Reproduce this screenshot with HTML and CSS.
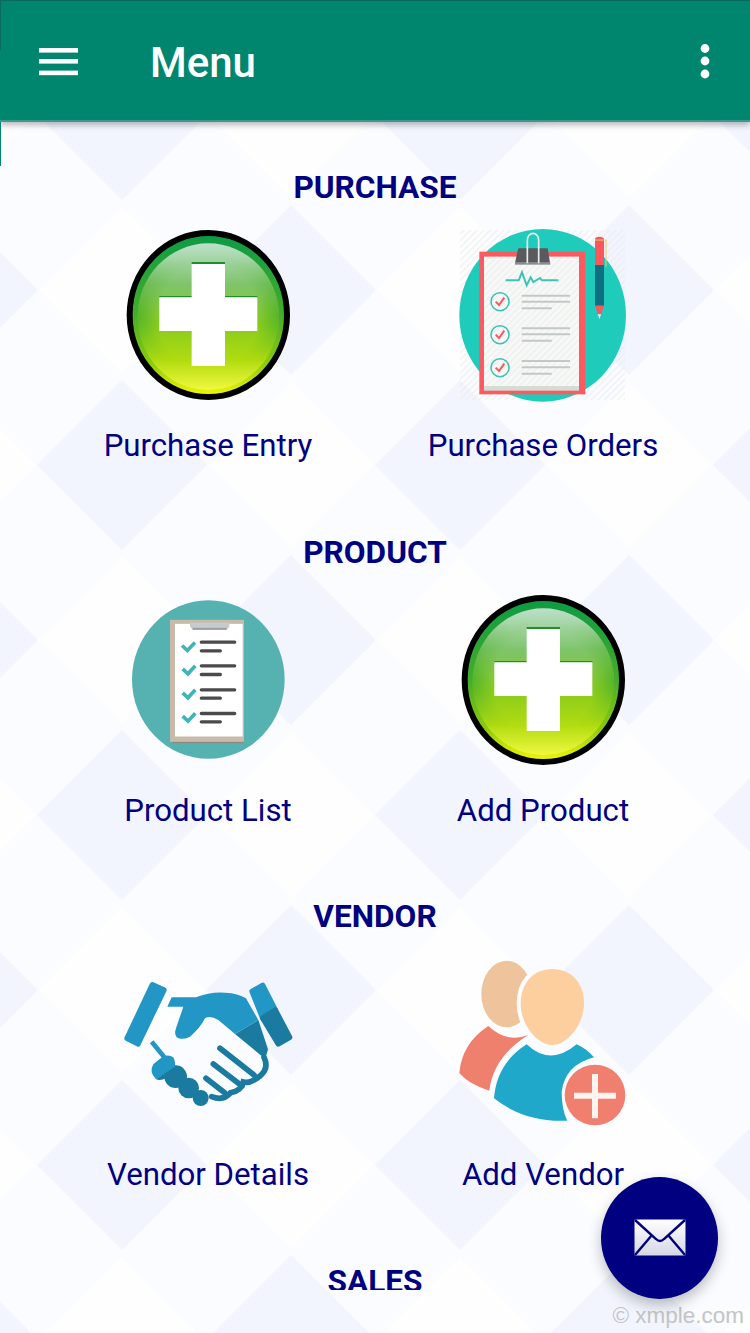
FILE: index.html
```html
<!DOCTYPE html>
<html lang="en">
<head>
<meta charset="utf-8">
<title>Menu</title>
<link rel="stylesheet" href="styles.css">
</head>
<body>
<div class="screen">
  <svg class="backdrop" width="750" height="1333" aria-hidden="true">
    <defs>
      <pattern id="diamonds" width="338" height="350" patternUnits="userSpaceOnUse" patternTransform="translate(37 30)">
        <rect width="338" height="350" fill="#fbfcff"/>
        <path d="M85 0L170 85L85 170L0 85Z" fill="#f2f5fd"/>
        <path d="M254 175L339 260L254 345L169 260Z" fill="#f2f5fd"/>
        <path d="M85 177L168 260L85 343L2 260Z" fill="#fefefe"/>
        <path d="M254 2L337 85L254 168L171 85Z" fill="#fefefe"/>
      </pattern>
      <linearGradient id="gRing" x1="0" y1="0" x2="0" y2="1">
        <stop offset="0" stop-color="#0c9a44"/>
        <stop offset=".5" stop-color="#45ad2a"/>
        <stop offset=".8" stop-color="#8ccb0c"/>
        <stop offset="1" stop-color="#f6fa00"/>
      </linearGradient>
      <linearGradient id="gBall" x1="0" y1="0" x2="0" y2="1">
        <stop offset="0" stop-color="#bce0ca"/>
        <stop offset=".28" stop-color="#7fc46a"/>
        <stop offset=".55" stop-color="#86ca1e"/>
        <stop offset=".8" stop-color="#b2dc10"/>
        <stop offset="1" stop-color="#f0f840"/>
      </linearGradient>
      <radialGradient id="gEdge" cx=".5" cy=".5" r=".5">
        <stop offset=".72" stop-color="#45ad2a" stop-opacity="0"/>
        <stop offset="1" stop-color="#45ad2a" stop-opacity=".75"/>
      </radialGradient>
      <linearGradient id="gEdgeFade" x1="0" y1="0" x2="0" y2="1">
        <stop offset=".2" stop-color="#000"/>
        <stop offset=".5" stop-color="#fff"/>
        <stop offset=".75" stop-color="#000"/>
      </linearGradient>
      <mask id="edgeMask"><rect x="0" y="0" width="650" height="570" fill="url(#gEdgeFade)"/></mask>
      <linearGradient id="gEnv" x1="0" y1="0" x2="0" y2="1">
        <stop offset="0" stop-color="#ffffff"/>
        <stop offset="1" stop-color="#d5d7e4"/>
      </linearGradient>
      <pattern id="hatch" width="14" height="14" patternUnits="userSpaceOnUse" patternTransform="rotate(45)">
        <rect width="5" height="14" fill="#e6e8ea" fill-opacity=".55"/>
      </pattern>
      <g id="plus-ball">
        <ellipse cx="325" cy="285" rx="236" ry="246" fill="url(#gRing)" stroke="#000" stroke-width="18"/>
        <ellipse cx="325" cy="290" rx="212" ry="220" fill="url(#gBall)"/>
        <ellipse cx="325" cy="290" rx="212" ry="220" fill="url(#gEdge)" mask="url(#edgeMask)"/>
        <rect x="275" y="126" width="100" height="6" fill="#1e8f2c"/>
        <rect x="178" y="228" width="294" height="5" fill="#1e8f2c"/>
        <path d="M275 132H375V232H472V333H375V438H275V333H178V232H275Z" fill="#fff"/>
      </g>
    </defs>
    <rect width="750" height="1333" fill="url(#diamonds)"/>
  </svg>

  <header class="appbar">
    <svg class="menu-icon" width="39" height="28" viewBox="0 0 39 28" aria-hidden="true">
      <rect y="0" width="39" height="4.6" fill="#fff"/>
      <rect y="11" width="39" height="4.6" fill="#fff"/>
      <rect y="22.6" width="39" height="4.6" fill="#fff"/>
    </svg>
    <h1 class="appbar-title">Menu</h1>
    <svg class="more-icon" width="10" height="36" viewBox="0 0 10 36" aria-hidden="true">
      <circle cx="5" cy="4.5" r="4.4" fill="#fff"/>
      <circle cx="5" cy="17" r="4.4" fill="#fff"/>
      <circle cx="5" cy="30" r="4.4" fill="#fff"/>
    </svg>
  </header>
  <span class="edge-top"></span>
  <span class="edge-side"></span>

  <main class="content">
    <section class="group">
      <h2 class="group-title">PURCHASE</h2>
      <div class="tiles">
        <a class="tile">
          <svg class="tile-icon" viewBox="24 30 600 510" aria-hidden="true"><use href="#plus-ball"/></svg>
          <span class="tile-label">Purchase Entry</span>
        </a>
        <a class="tile">
          <svg class="tile-icon" viewBox="9 30 600 510" aria-hidden="true">
            <rect x="60" y="30" width="495" height="510" fill="url(#hatch)"/>
            <ellipse cx="308" cy="286" rx="250" ry="259" fill="#1fcbbb"/>
            <rect x="118" y="95" width="318" height="428" fill="#fb5a60"/>
            <rect x="132" y="110" width="285" height="400" fill="#f8f8f7"/>
            <rect x="132" y="110" width="285" height="400" fill="url(#hatch)"/>
            <rect x="132" y="498" width="285" height="14" fill="#d5dcd4"/>
            <path d="M262 90V65a17 20 0 0 1 34 0V90" transform="translate(0 -5)" fill="none" stroke="#e8eeee" stroke-width="5"/>
            <path d="M235 85H323L330 128H225Z" fill="#5a5a5e"/>
            <rect x="225" y="128" width="106" height="6" fill="#8b8d90"/>
            <path d="M262 80V130M296 80V130" stroke="#e8eeee" stroke-width="5"/>
            <path d="M197 181H236L246 157L260 196L272 172L280 186L300 174L306 181H355" fill="none" stroke="#3cc4b6" stroke-width="6"/>
            <g fill="none">
              <circle cx="180" cy="245" r="27" stroke="#36c2b4" stroke-width="4.5"/>
              <path d="M167 245L177 255L193 233" stroke="#f9565d" stroke-width="6"/>
              <circle cx="180" cy="344" r="27" stroke="#36c2b4" stroke-width="4.5"/>
              <path d="M167 344L177 354L193 332" stroke="#f9565d" stroke-width="6"/>
              <circle cx="180" cy="443" r="27" stroke="#36c2b4" stroke-width="4.5"/>
              <path d="M167 443L177 453L193 431" stroke="#f9565d" stroke-width="6"/>
              <path d="M245 227H390M245 245H390M245 265H335M245 325H390M245 343H390M245 362H335M245 423H390M245 442H390M245 461H335" stroke="#c3c7c6" stroke-width="6"/>
            </g>
            <path d="M465 58Q465 50 478 50Q492 50 492 58V135H465Z" fill="#f9565d"/>
            <rect x="465" y="135" width="27" height="122" fill="#0e6f80"/>
            <path d="M465 257H492L483 283H474Z" fill="#f9565d"/>
            <path d="M474 283H483L478 298Z" fill="#f5f5f5"/>
            <path d="M465 60H498V140" fill="none" stroke="#f0cf6c" stroke-width="3"/>
          </svg>
          <span class="tile-label">Purchase Orders</span>
        </a>
      </div>
    </section>

    <section class="group">
      <h2 class="group-title">PRODUCT</h2>
      <div class="tiles">
        <a class="tile">
          <svg class="tile-icon" viewBox="-36 13.5 600 510" aria-hidden="true">
            <ellipse cx="265" cy="267" rx="229" ry="238" fill="#56b1b1"/>
            <rect x="158" y="96" width="214" height="362" fill="#8d8a84"/>
            <rect x="150" y="88" width="222" height="366" fill="#c9baaa"/>
            <rect x="165" y="100" width="203" height="338" fill="#fff"/>
            <path d="M210 96H328V108L320 118H218L210 108Z" fill="#c6cbcb"/>
            <rect x="218" y="112" width="102" height="6" fill="#9a9e9e"/>
            <g fill="none" stroke="#41b4bb" stroke-width="11">
              <path d="M186 165L202 180L225 156"/>
              <path d="M188 235L204 250L226 226"/>
              <path d="M188 307L204 322L226 298"/>
              <path d="M188 377L204 392L226 368"/>
            </g>
            <g fill="none" stroke="#4a4a4a" stroke-width="10" stroke-linecap="round">
              <path d="M244 155H344M244 181H301M244 226H344M244 252H301M244 298H344M244 323H301M244 369H344M244 394H301"/>
            </g>
          </svg>
          <span class="tile-label">Product List</span>
        </a>
        <a class="tile">
          <svg class="tile-icon" viewBox="24 30 600 510" aria-hidden="true"><use href="#plus-ball"/></svg>
          <span class="tile-label">Add Product</span>
        </a>
      </div>
    </section>

    <section class="group">
      <h2 class="group-title">VENDOR</h2>
      <div class="tiles">
        <a class="tile">
          <svg class="tile-icon" viewBox="-6 -3 600 510" aria-hidden="true">
            <path d="M127 74L162 90L84 252L51 235Z" fill="#2296c4" stroke="#2296c4" stroke-width="16" stroke-linejoin="round"/>
            <path d="M426 94L458 76L496 150L458 174Z" fill="#2296c4" stroke="#2296c4" stroke-width="16" stroke-linejoin="round"/>
            <path d="M458 174L496 150L539 232L505 252Z" fill="#1a7a9f" stroke="#1a7a9f" stroke-width="16" stroke-linejoin="round"/>
            <path d="M375 222L445 180L474 268L466 296L455 288Z" fill="#1a7a9f"/>
            <path d="M172 140L185 112H258Q300 95 345 98Q385 100 408 115L445 180L375 222L325 180Q300 165 285 175Q270 205 240 230Q215 242 200 232Q192 222 198 205L220 140Z" fill="#2296c4"/>
            <g fill="none" stroke="#1a7a9f" stroke-width="17" stroke-linecap="round">
              <path d="M330 265L432 345"/>
              <path d="M310 312L396 378"/>
              <path d="M288 355L344 398"/>
              <path d="M462 292Q478 325 450 348Q420 372 400 366Q395 392 362 398Q340 424 305 410"/>
            </g>
            <path d="M125 245L168 298" stroke="#2296c4" stroke-width="14" fill="none"/>
            <circle cx="272" cy="414" r="24" fill="#1a7a9f"/>
            <circle cx="236" cy="384" r="31" fill="#1a7a9f"/>
            <circle cx="197" cy="350" r="34" fill="#1a7a9f"/>
            <path d="M138 358Q116 335 130 313L148 298Q170 278 190 292Q200 312 192 325Z" fill="#2296c4"/>
            <path d="M138 358L192 322Q200 342 170 354Q150 364 138 358Z" fill="#1a7a9f"/>
          </svg>
          <span class="tile-label">Vendor Details</span>
        </a>
        <a class="tile">
          <svg class="tile-icon" viewBox="-21 27 600 510" aria-hidden="true">
            <ellipse cx="170" cy="132" rx="76" ry="100" fill="#efc49c"/>
            <path d="M115 228Q170 280 235 255Q130 320 118 422Q60 405 28 370Q35 280 115 228Z" fill="#f0806e"/>
            <path d="M300 57C250 57 212 100 212 160C212 225 262 285 307 285" fill="none" stroke="#fbfcff" stroke-width="24"/>
            <path d="M212 160C212 100 250 57 307 57C365 57 402 100 402 160C402 225 350 285 307 285C262 285 212 225 212 160Z" fill="#fdcf9f"/>
            <path d="M230 283Q300 350 380 283Q412 298 432 322Q345 345 335 425Q335 480 352 512Q225 518 132 445Q140 340 230 283Z" fill="#1fa8c9"/>
            <circle cx="435" cy="435" r="98" fill="#fbfcff"/>
            <circle cx="435" cy="435" r="91" fill="#f07f6f"/>
            <path d="M435 372V505M372 437H498" stroke="#fdf3ef" stroke-width="18" fill="none"/>
          </svg>
          <span class="tile-label">Add Vendor</span>
        </a>
      </div>
    </section>

    <section class="group">
      <h2 class="group-title">SALES</h2>
    </section>
  </main>

  <span class="watermark">© xmple.com</span>
  <button class="fab" aria-label="Mail">
    <svg width="52" height="38" viewBox="0 0 52 38" aria-hidden="true">
      <rect x=".5" y=".5" width="51" height="36" rx="1" fill="url(#gEnv)"/>
      <path d="M1 1L22 20Q26 24 30 20L51 1M1 36L18 16M51 36L34 16" fill="none" stroke="#000080" stroke-width="2.4"/>
    </svg>
  </button>
</div>
</body>
</html>
```
FILE: styles.css
```css
* { box-sizing: border-box; }

html, body {
  margin: 0;
  padding: 0;
  background: #fbfcff;
}

.screen {
  position: relative;
  width: 750px;
  height: 1333px;
  overflow: hidden;
  font-family: Roboto, "Liberation Sans", sans-serif;
  color: #000080;
}

.backdrop {
  position: absolute;
  inset: 0;
}

.appbar {
  position: relative;
  display: flex;
  align-items: center;
  height: 122px;
  padding: 0 40px 0 39px;
  background: #00856f;
  border-top: 1px solid #0a6a5c;
  border-bottom: 2px solid #3b9a8c;
  box-shadow: 0 3px 6px rgba(0, 0, 0, 0.28);
}

.menu-icon { flex: none; margin-top: 2px; }

.appbar-title {
  flex: 1;
  margin: 4px 0 0 72px;
  font-size: 42px;
  font-weight: 500;
  line-height: 50px;
  color: #fff;
}

.more-icon { flex: none; margin-top: 2px; }

.edge-top {
  position: absolute;
  left: 0;
  top: 0;
  width: 1px;
  height: 50px;
  background: #0a6a5c;
}

.edge-side {
  position: absolute;
  left: 0;
  top: 122px;
  width: 1px;
  height: 44px;
  background: #00856f;
}

.content {
  position: relative;
  height: 1168px;
  overflow: hidden;
  padding-top: 46px;
}

.group {
  height: 364.5px;
}

.group-title {
  margin: 0;
  height: 40px;
  font-size: 31.6px;
  font-weight: 700;
  line-height: 40px;
  text-align: center;
  color: #000080;
}

.tiles {
  display: grid;
  grid-template-columns: 335px 335px;
  padding: 22px 0 0 40.5px;
}

.tile {
  display: flex;
  flex-direction: column;
  align-items: center;
}

.tile-icon {
  display: block;
  width: 200px;
  height: 170px;
  overflow: visible;
}

.tile-label {
  margin-top: 25px;
  font-size: 31.2px;
  line-height: 42px;
  white-space: nowrap;
  color: #000080;
}

.fab {
  position: absolute;
  left: 601px;
  top: 1177px;
  display: flex;
  align-items: center;
  justify-content: center;
  width: 117px;
  height: 122px;
  padding: 0;
  border: 0;
  border-radius: 50%;
  background: #000080;
  box-shadow: 0 6px 14px rgba(0, 0, 0, 0.25);
}

.watermark {
  position: absolute;
  right: 6px;
  top: 1303px;
  font-family: "Liberation Sans", sans-serif;
  font-size: 22.5px;
  line-height: 26px;
  color: #c4c4c4;
}
```
